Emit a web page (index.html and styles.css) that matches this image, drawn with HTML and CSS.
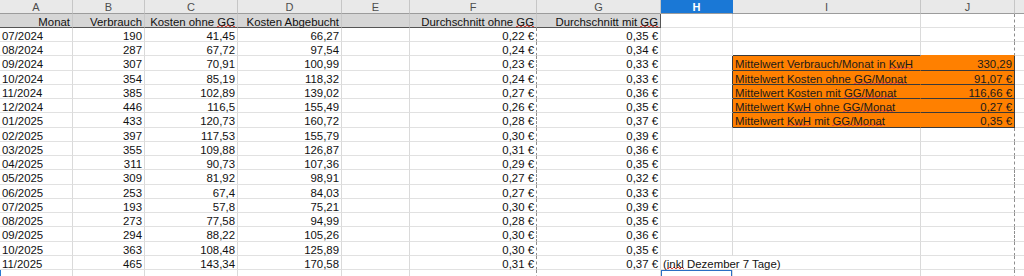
FILE: index.html
```html
<!DOCTYPE html>
<html lang="de">
<head>
<meta charset="utf-8">
<title>Stromverbrauch</title>
<link rel="stylesheet" href="styles.css">
</head>
<body>
<div class="sheet">
  <div class="hd">A</div><div class="hd">B</div><div class="hd">C</div><div class="hd">D</div><div class="hd">E</div><div class="hd">F</div><div class="hd">G</div><div class="hd sel">H</div><div class="hd">I</div><div class="hd">J</div><div class="hd last"></div>

  <div class="t n">Monat</div><div class="t n">Verbrauch</div><div class="t n">Kosten ohne <span class="sp">GG</span></div><div class="t n">Kosten Abgebucht</div><div class="t"></div><div class="t n">Durchschnitt ohne <span class="sp">GG</span></div><div class="t n tend">Durchschnitt mit <span class="sp">GG</span></div><div class="c"></div><div class="c"></div><div class="c pb"></div><div class="c k"></div>

  <div class="c">07/2024</div><div class="c n">190</div><div class="c n">41,45</div><div class="c n">66,27</div><div class="c"></div><div class="c n pb">0,22 €</div><div class="c n">0,35 €</div><div class="c"></div><div class="c"></div><div class="c pb"></div><div class="c k"></div>

  <div class="c">08/2024</div><div class="c n">287</div><div class="c n">67,72</div><div class="c n">97,54</div><div class="c"></div><div class="c n pb">0,24 €</div><div class="c n">0,34 €</div><div class="c"></div><div class="c otop"></div><div class="c pb otopj"></div><div class="c k"></div>

  <div class="c">09/2024</div><div class="c n">307</div><div class="c n">70,91</div><div class="c n">100,99</div><div class="c"></div><div class="c n pb">0,23 €</div><div class="c n">0,33 €</div><div class="c oleft"></div><div class="c oi">Mittelwert Verbrauch/Monat in <span class="sp">KwH</span></div><div class="c n oj">330,29</div><div class="c k"></div>

  <div class="c">10/2024</div><div class="c n">354</div><div class="c n">85,19</div><div class="c n">118,32</div><div class="c"></div><div class="c n pb">0,24 €</div><div class="c n">0,33 €</div><div class="c oleft"></div><div class="c oi">Mittelwert Kosten ohne <span class="sp">GG/Monat</span></div><div class="c n oj">91,07 €</div><div class="c k"></div>

  <div class="c">11/2024</div><div class="c n">385</div><div class="c n">102,89</div><div class="c n">139,02</div><div class="c"></div><div class="c n pb">0,27 €</div><div class="c n">0,36 €</div><div class="c oleft"></div><div class="c oi">Mittelwert Kosten mit <span class="sp">GG/Monat</span></div><div class="c n oj">116,66 €</div><div class="c k"></div>

  <div class="c">12/2024</div><div class="c n">446</div><div class="c n">116,5</div><div class="c n">155,49</div><div class="c"></div><div class="c n pb">0,26 €</div><div class="c n">0,35 €</div><div class="c oleft"></div><div class="c oi">Mittelwert <span class="sp">KwH</span> ohne <span class="sp">GG/Monat</span></div><div class="c n oj">0,27 €</div><div class="c k"></div>

  <div class="c">01/2025</div><div class="c n">433</div><div class="c n">120,73</div><div class="c n">160,72</div><div class="c"></div><div class="c n pb">0,28 €</div><div class="c n">0,37 €</div><div class="c oleft"></div><div class="c oi">Mittelwert <span class="sp">KwH</span> mit <span class="sp">GG/Monat</span></div><div class="c n oj">0,35 €</div><div class="c k"></div>

  <div class="c">02/2025</div><div class="c n">397</div><div class="c n">117,53</div><div class="c n">155,79</div><div class="c"></div><div class="c n pb">0,30 €</div><div class="c n">0,39 €</div><div class="c"></div><div class="c"></div><div class="c pb"></div><div class="c k"></div>

  <div class="c">03/2025</div><div class="c n">355</div><div class="c n">109,88</div><div class="c n">126,87</div><div class="c"></div><div class="c n pb">0,31 €</div><div class="c n">0,36 €</div><div class="c"></div><div class="c"></div><div class="c pb"></div><div class="c k"></div>

  <div class="c">04/2025</div><div class="c n">311</div><div class="c n">90,73</div><div class="c n">107,36</div><div class="c"></div><div class="c n pb">0,29 €</div><div class="c n">0,35 €</div><div class="c"></div><div class="c"></div><div class="c pb"></div><div class="c k"></div>

  <div class="c">05/2025</div><div class="c n">309</div><div class="c n">81,92</div><div class="c n">98,91</div><div class="c"></div><div class="c n pb">0,27 €</div><div class="c n">0,32 €</div><div class="c"></div><div class="c"></div><div class="c pb"></div><div class="c k"></div>

  <div class="c">06/2025</div><div class="c n">253</div><div class="c n">67,4</div><div class="c n">84,03</div><div class="c"></div><div class="c n pb">0,27 €</div><div class="c n">0,33 €</div><div class="c"></div><div class="c"></div><div class="c pb"></div><div class="c k"></div>

  <div class="c">07/2025</div><div class="c n">193</div><div class="c n">57,8</div><div class="c n">75,21</div><div class="c"></div><div class="c n pb">0,30 €</div><div class="c n">0,39 €</div><div class="c"></div><div class="c"></div><div class="c pb"></div><div class="c k"></div>

  <div class="c">08/2025</div><div class="c n">273</div><div class="c n">77,58</div><div class="c n">94,99</div><div class="c"></div><div class="c n pb">0,28 €</div><div class="c n">0,35 €</div><div class="c"></div><div class="c"></div><div class="c pb"></div><div class="c k"></div>

  <div class="c">09/2025</div><div class="c n">294</div><div class="c n">88,22</div><div class="c n">105,26</div><div class="c"></div><div class="c n pb">0,30 €</div><div class="c n">0,36 €</div><div class="c"></div><div class="c"></div><div class="c pb"></div><div class="c k"></div>

  <div class="c">10/2025</div><div class="c n">363</div><div class="c n">108,48</div><div class="c n">125,89</div><div class="c"></div><div class="c n pb">0,30 €</div><div class="c n">0,35 €</div><div class="c"></div><div class="c"></div><div class="c pb"></div><div class="c k"></div>

  <div class="c">11/2025</div><div class="c n">465</div><div class="c n">143,34</div><div class="c n">170,58</div><div class="c"></div><div class="c n pb">0,31 €</div><div class="c n">0,37 €</div><div class="c over">(<span class="sp">inkl</span> Dezember 7 Tage)</div><div class="c"></div><div class="c pb"></div><div class="c k"></div>

  <div class="c rowsel"></div><div class="c"></div><div class="c"></div><div class="c"></div><div class="c"></div><div class="c pb"></div><div class="c"></div><div class="c cur"></div><div class="c"></div><div class="c pb"></div><div class="c k"></div>
</div>
</body>
</html>
```

FILE: styles.css
```css
html, body {
  margin: 0;
  padding: 0;
  background: #ffffff;
}

.sheet {
  display: grid;
  grid-template-columns: 73px 72px 93px 104px 68px 127px 124px 72px 188px 94px 9px;
  grid-template-rows: 14px 14px repeat(18, 14.24px);
  width: 1024px;
  height: 276px;
  overflow: hidden;
  font-family: "Liberation Sans", Arial, sans-serif;
  font-size: 11.4px;
  color: #111111;
}

.sheet > div {
  box-sizing: border-box;
  white-space: nowrap;
  overflow: visible;
  line-height: 13px;
  padding: 2px 2px 0 2px;
}

.sheet > .hd {
  padding-top: 1px;
}

.hd {
  background: #e9e9e9;
  color: #4d4d4d;
  font-size: 11px;
  text-align: center;
  border-right: 1px solid #c6c6c6;
  border-bottom: 1px solid #9c9c9c;
}

.hd.sel {
  background: #1a78d6;
  color: #ffffff;
  font-weight: bold;
  border-right-color: #1a78d6;
}

.hd.last {
  border-right: none;
}

.t {
  background: #d6d6d6;
  border-right: 1px solid #c8c8c8;
  border-bottom: 1px solid #555555;
}

.t.tend {
  border-right: 1px solid #555555;
}

.c {
  border-right: 1px solid #dadada;
  border-bottom: 1px solid #e1e1e1;
}

.c.k {
  border-right: none;
}

.n {
  text-align: right;
}

.pb {
  border-right: 1px dashed #8e8e8e;
}

.sp {
  background-image:
    linear-gradient(135deg, transparent 40%, #e0453a 40%, #e0453a 60%, transparent 60%),
    linear-gradient(45deg, transparent 40%, #e0453a 40%, #e0453a 60%, transparent 60%);
  background-size: 4px 2px;
  background-repeat: repeat-x;
  background-position: 0 calc(100% - 1px), 2px calc(100% - 1px);
}

.otop {
  border-bottom: 1px solid #3a3a3a;
}

.otopj {
  border-bottom-color: #ff8000;
}

.oleft {
  border-right: 1px solid #3a3a3a;
}

.oi {
  background: #ff8000;
  color: #1a1a1a;
  border-right-color: #ff8000;
  border-bottom: 1px solid #3a3a3a;
}

.oj {
  background: #ff8000;
  color: #1a1a1a;
  border-right: 1px solid #3a3a3a;
  border-bottom: 1px solid #3a3a3a;
}

.over {
  border-right-color: transparent;
  position: relative;
  z-index: 1;
}

.cur {
  box-shadow: inset 0 0 0 1px #2a6fc4;
}

.rowsel {
  box-shadow: inset 1px 0 0 0 #2a78d0;
}
```
